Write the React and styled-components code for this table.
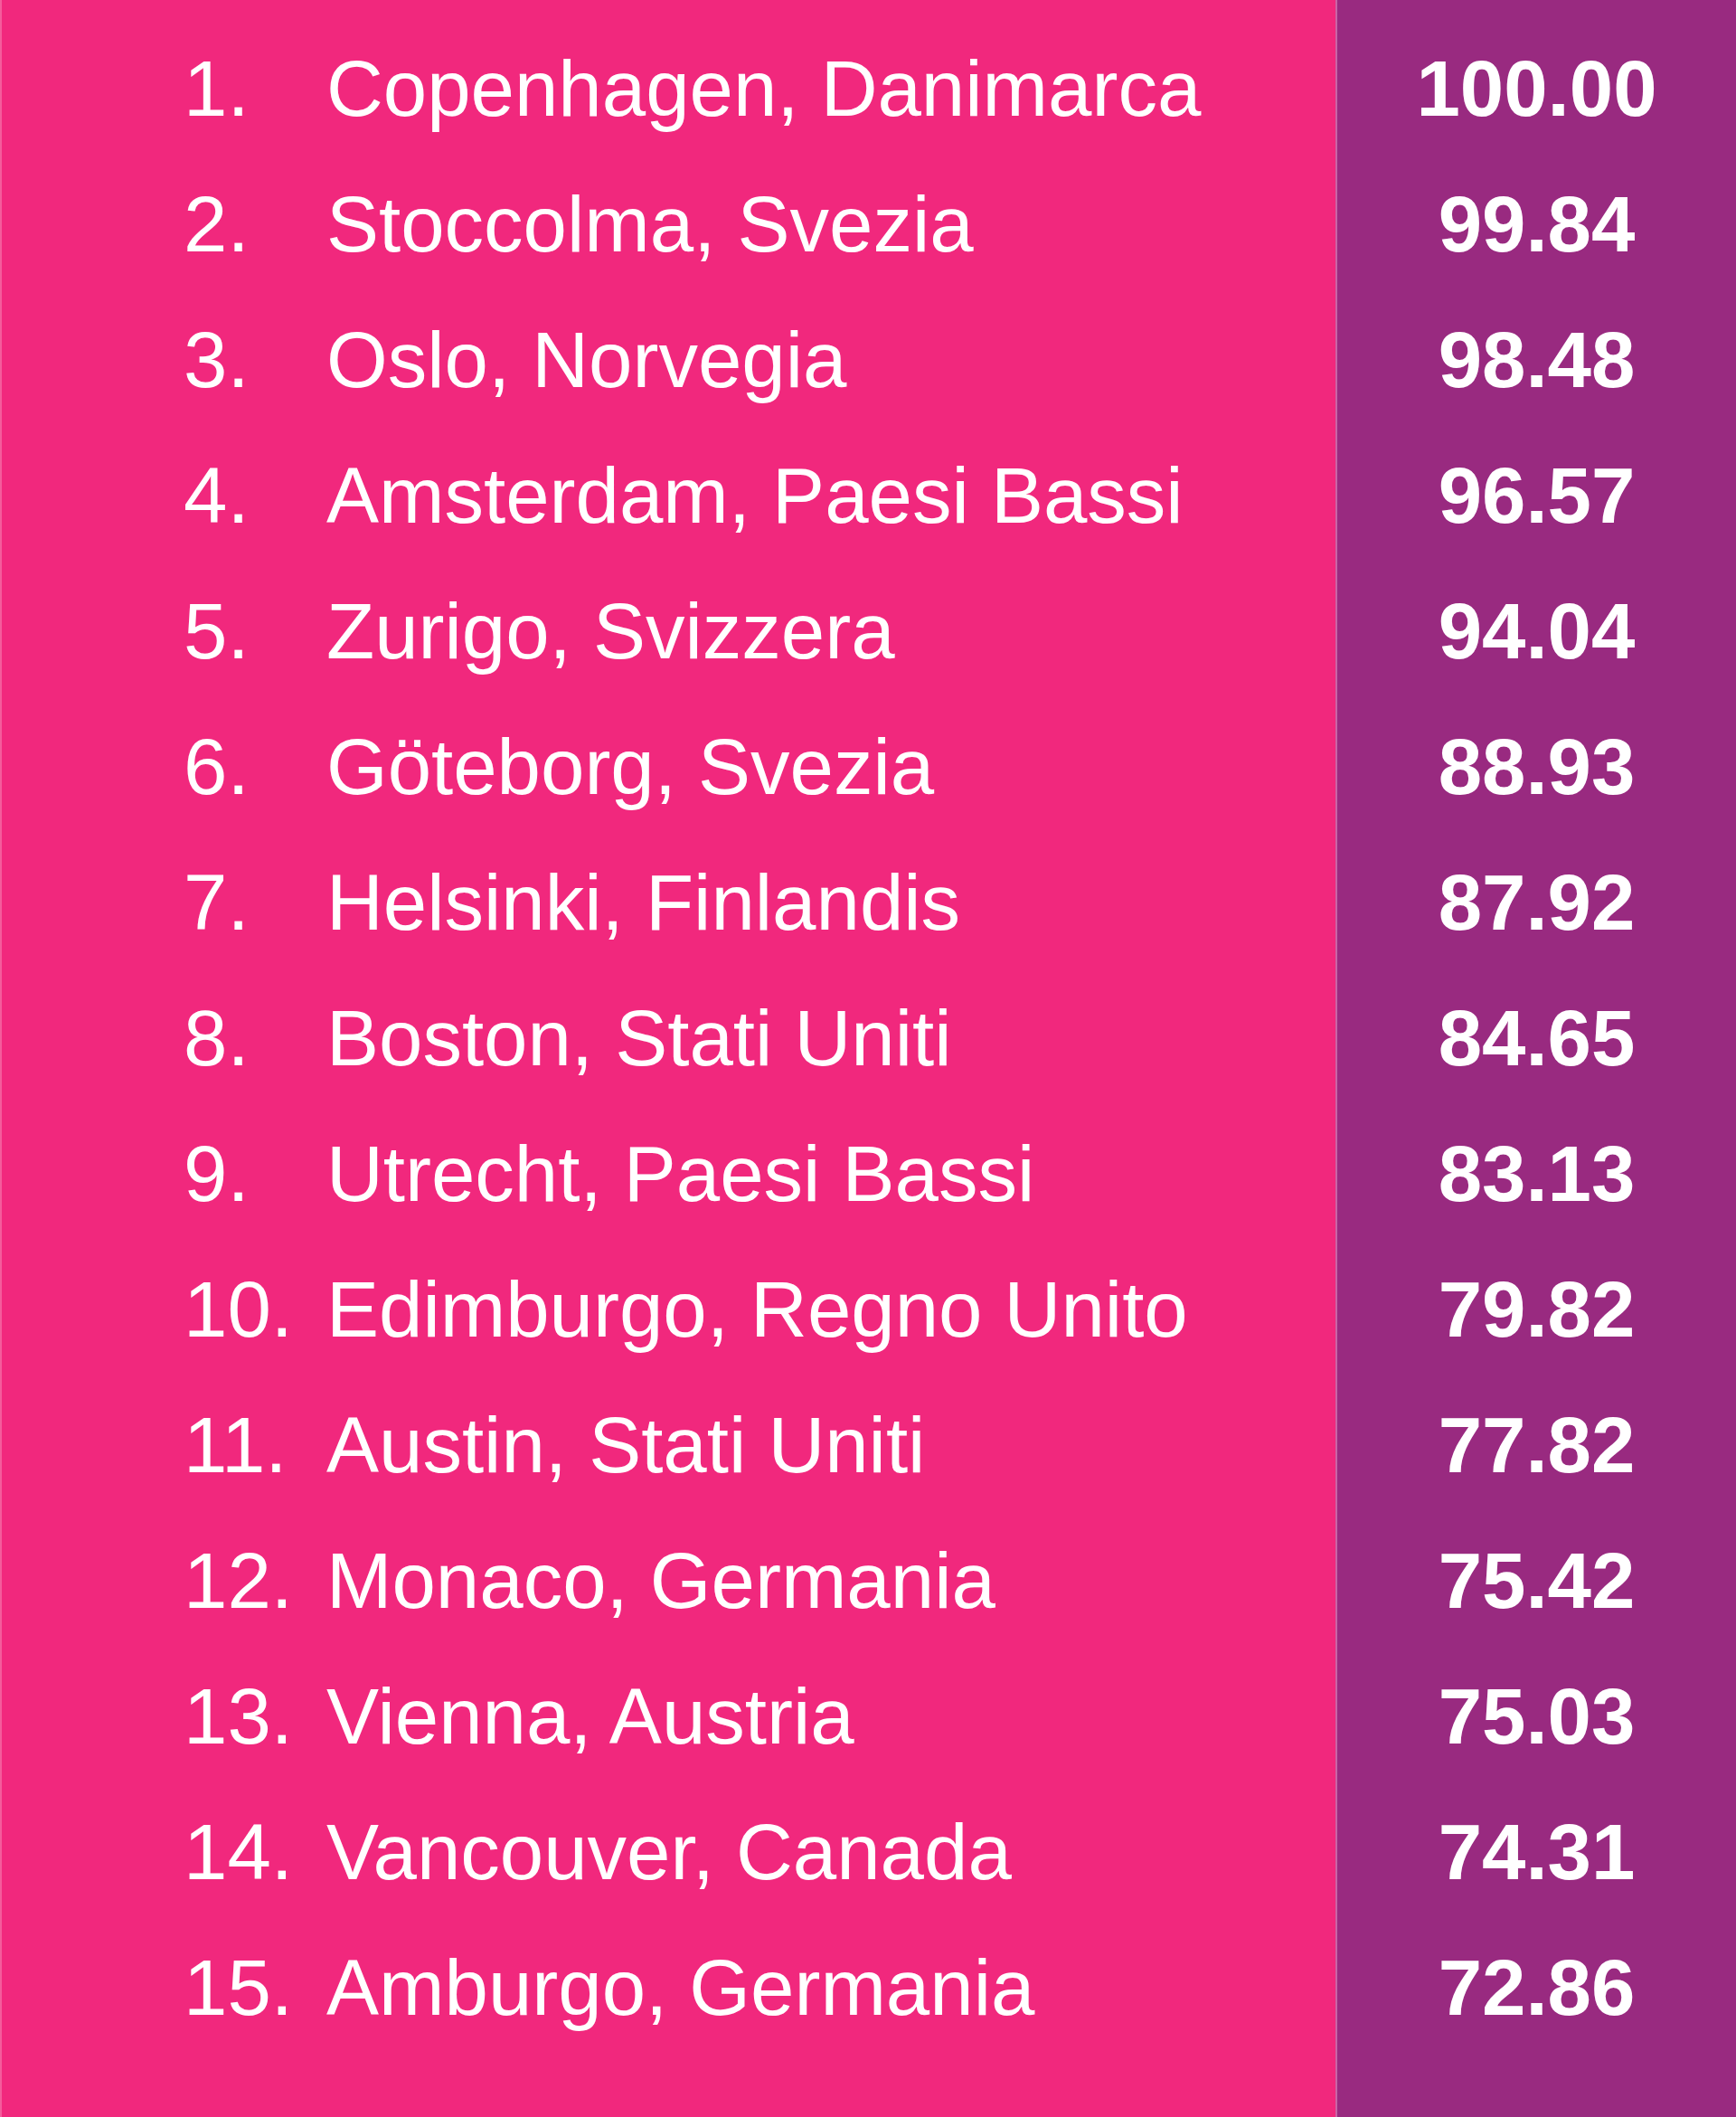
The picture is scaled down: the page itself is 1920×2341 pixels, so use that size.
import styled, { createGlobalStyle } from "styled-components";

const GlobalStyle = createGlobalStyle`
  html, body {
    margin: 0;
    padding: 0;
    background: #f1287d;
  }
`;

const rows = [
  ["Copenhagen, Danimarca", "100.00"],
  ["Stoccolma, Svezia", "99.84"],
  ["Oslo, Norvegia", "98.48"],
  ["Amsterdam, Paesi Bassi", "96.57"],
  ["Zurigo, Svizzera", "94.04"],
  ["Göteborg, Svezia", "88.93"],
  ["Helsinki, Finlandis", "87.92"],
  ["Boston, Stati Uniti", "84.65"],
  ["Utrecht, Paesi Bassi", "83.13"],
  ["Edimburgo, Regno Unito", "79.82"],
  ["Austin, Stati Uniti", "77.82"],
  ["Monaco, Germania", "75.42"],
  ["Vienna, Austria", "75.03"],
  ["Vancouver, Canada", "74.31"],
  ["Amburgo, Germania", "72.86"],
];

const Table = styled.div`
  display: grid;
  grid-template-columns: 1477px 2px 1fr;
  width: 1920px;
  min-height: 2341px;
  font-family: "Liberation Sans", Arial, sans-serif;
  color: #ffffff;
`;

const NameCol = styled.div`
  background: #f1287d;
  border-left: 2px solid #f45c9c;
  padding: 23px 0 0 201px;
`;

const Divider = styled.div`
  background: #c865a6;
`;

const ScoreCol = styled.div`
  background: #992a80;
  padding-top: 23px;
`;

const Row = styled.div`
  display: flex;
  height: 150px;
  line-height: 150px;
  font-size: 87px;
  white-space: nowrap;
`;

const Rank = styled.span`
  width: 158px;
  flex: none;
`;

const City = styled.span``;

const Score = styled.div`
  height: 150px;
  line-height: 150px;
  font-size: 87px;
  font-weight: 700;
  text-align: center;
`;

export default function App() {
  return (
    <>
      <GlobalStyle />
      <Table>
        <NameCol>
          {rows.map(([city], i) => (
            <Row key={city}>
              <Rank>{i + 1}.</Rank>
              <City>{city}</City>
            </Row>
          ))}
        </NameCol>
        <Divider />
        <ScoreCol>
          {rows.map(([city, score]) => (
            <Score key={city}>{score}</Score>
          ))}
        </ScoreCol>
      </Table>
    </>
  );
}
